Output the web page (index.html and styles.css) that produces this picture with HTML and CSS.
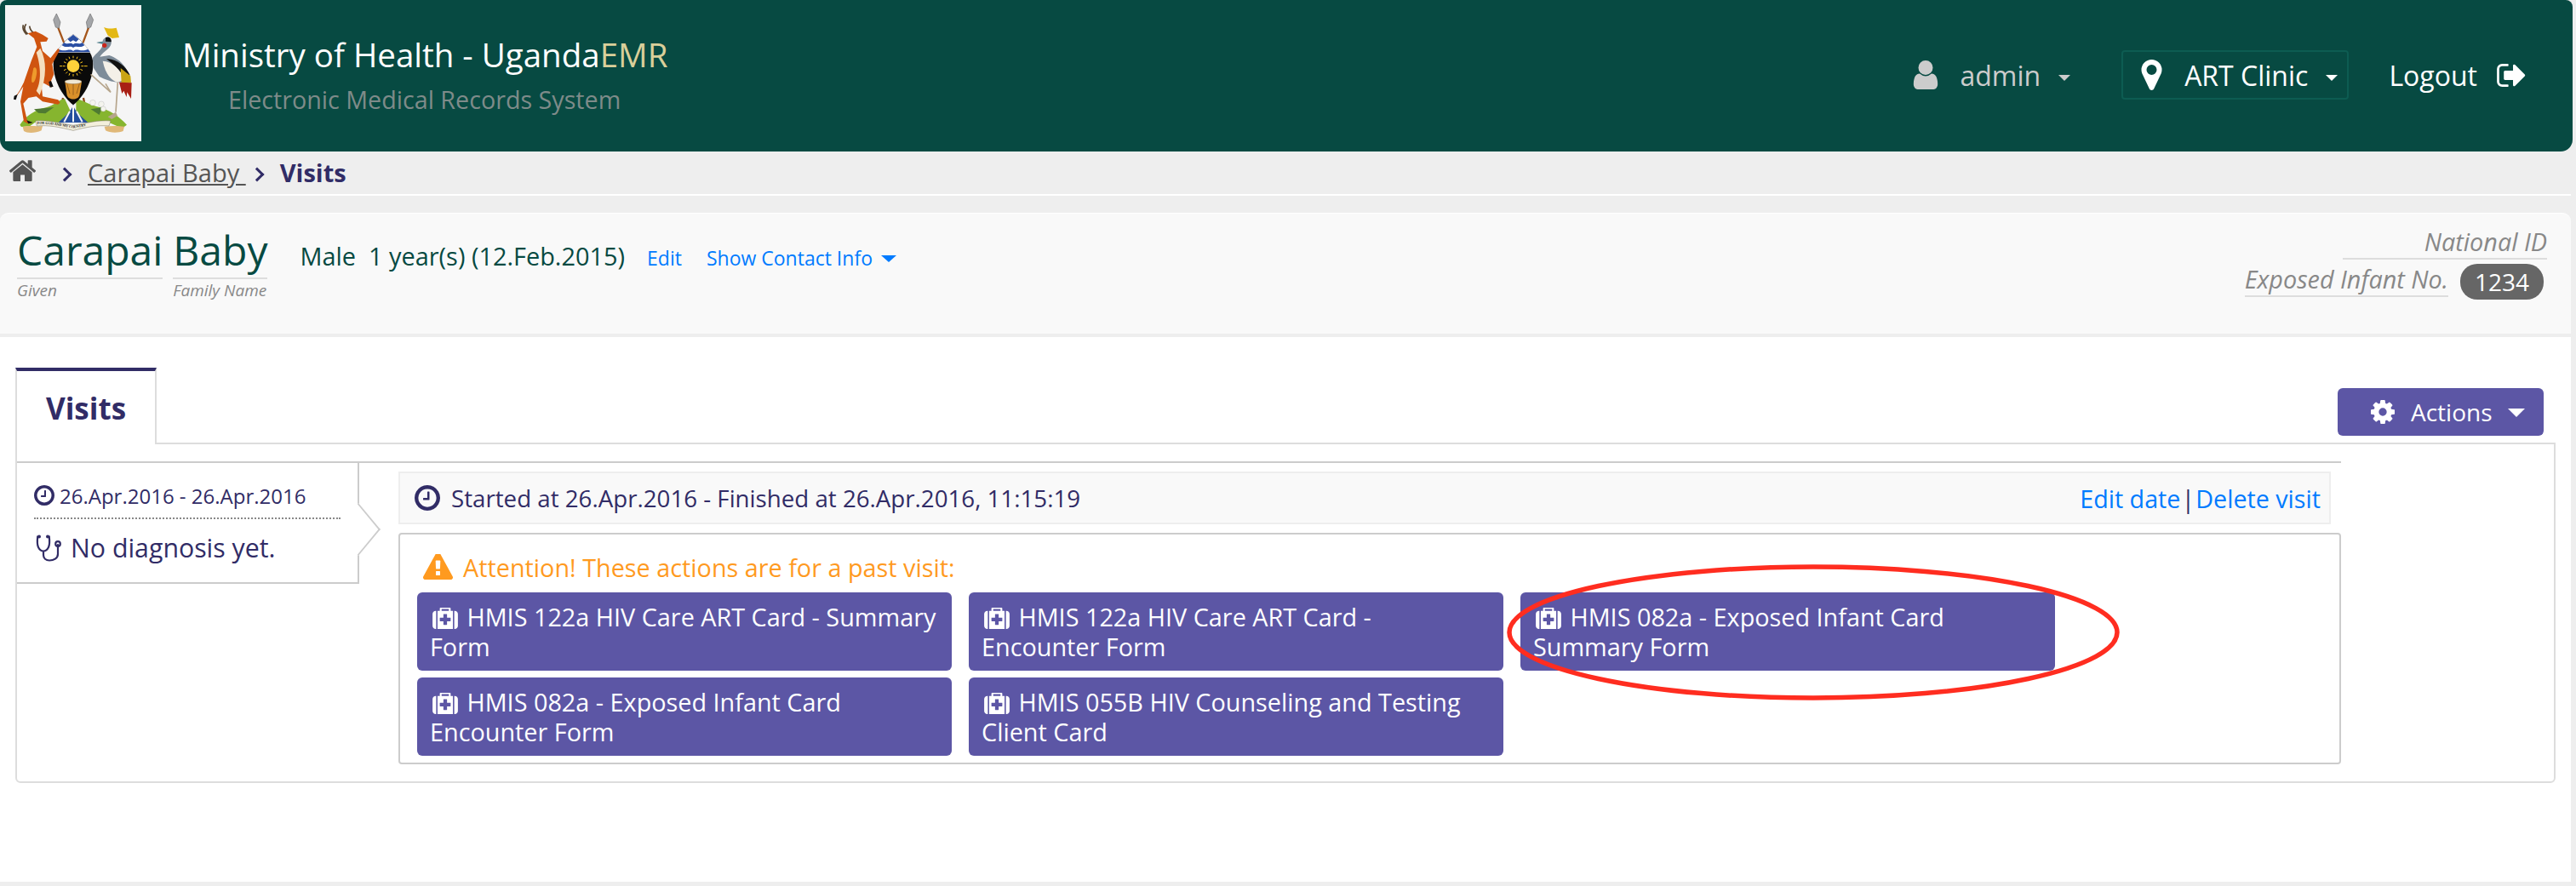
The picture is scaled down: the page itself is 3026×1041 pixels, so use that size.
FILE: index.html
```html
<!DOCTYPE html>
<html lang="en">
<head>
<meta charset="utf-8">
<title>UgandaEMR - Visits</title>
<link rel="stylesheet" href="styles.css">
</head>
<body>
<header class="header">
  <svg class="logo" viewBox="18 18 480 480" role="img" aria-label="Coat of arms of Uganda">
    <rect x="18" y="18" width="480" height="480" fill="#f5f5f5"/>
    <!-- spears -->
    <path d="M205 98L226 152M312 98L292 152" stroke="#a5561c" stroke-width="7" fill="none"/>
    <path d="M199 48L213 78L208 100L196 96L188 70Z M318 48L329 70L320 96L308 100L304 78Z" fill="#a3a5a8" stroke="#555" stroke-width="1.5"/>
    <path d="M222 345L212 398M294 345L304 398" stroke="#8f4a1a" stroke-width="7" fill="none"/>
    <!-- ground -->
    <path d="M70 440C90 410 125 385 165 378C190 372 205 352 228 348L250 395L210 432L128 428L105 445L75 447Z" fill="#86b52f"/>
    <path d="M268 348C290 352 315 370 350 378C385 388 420 410 447 440L430 452L385 432L305 432L268 395Z" fill="#86b52f"/>
    <path d="M120 385L190 378L160 400L135 398Z M320 385L360 378L350 405Z" fill="#4f7a32"/>
    <circle cx="327" cy="362" r="10" fill="#f4f4ee" stroke="#aaa"/>
    <circle cx="357" cy="367" r="10" fill="#f4f4ee" stroke="#aaa"/>
    <circle cx="364" cy="384" r="9" fill="#f4f4ee" stroke="#aaa"/>
    <!-- waterfall -->
    <path d="M258 368C262 395 290 410 310 432H206C226 410 252 395 258 368Z" fill="#244f9e"/>
    <path d="M258 372V430M246 392L226 430M270 392L290 430" stroke="#f5f5f5" stroke-width="6" fill="none"/>
    <!-- plinths and ribbon -->
    <path d="M80 447C100 442 125 446 150 444L146 460C125 470 95 470 84 462Z" fill="#e0b878"/>
    <path d="M368 446C395 442 420 444 438 446L434 462C415 470 385 468 372 460Z" fill="#e0b878"/>
    <path d="M125 426C170 422 210 434 258 442C305 434 345 422 390 426L384 444C345 440 305 448 258 460C210 448 170 440 130 444Z" fill="#f3efdc" stroke="#77705a" stroke-width="1.5"/>
    <path id="motto" d="M131 438C170 434 212 444 258 452C304 444 345 434 386 438" fill="none"/>
    <text class="motto"><textPath href="#motto">FOR GOD AND MY COUNTRY</textPath></text>
    <!-- shield -->
    <path d="M258 120C295 150 328 185 328 225C328 290 290 345 258 370C226 345 188 290 188 225C188 185 221 150 258 120Z" fill="#0a0a0a"/>
    <path d="M258 120C280 138 305 162 318 185H198C211 162 236 138 258 120Z" fill="#fff"/>
    <path d="M258 122L278 138L268 148L258 142L248 148L238 138Z M226 150C240 160 246 146 258 156C270 146 276 160 290 150L298 160C280 172 270 158 258 168C246 158 236 172 218 160Z M206 173C230 186 244 168 258 180C272 168 286 186 310 173L318 184H198Z" fill="#2b4fa3"/>
    <circle cx="258" cy="233" r="22" fill="#ffd23a"/>
    <g stroke="#ffc81e" stroke-width="3">
      <path d="M258 197V205M258 261V269M222 233H230M286 233H294M232 207L238 213M278 253L284 259M232 259L238 253M278 213L284 207M243 200L246 208M270 258L273 266M243 266L246 258M270 208L273 200M225 218L233 222M283 244L291 248M225 248L233 244M283 222L291 218M210 233H220M296 233H308"/>
    </g>
    <path d="M229 288C232 280 284 280 288 288L280 335C276 354 240 354 236 335Z" fill="#d8902a"/>
    <ellipse cx="258" cy="288" rx="30" ry="8" fill="#efe8d4" stroke="#5b3a16"/>
    <path d="M236 295L246 330M280 295L270 330M258 296V335" stroke="#7a4a16" stroke-width="2"/>
    <!-- kob -->
    <path d="M92 85C84 95 84 108 98 120M82 88C78 100 84 112 94 122M104 92C106 105 112 112 120 116" stroke="#5a4630" stroke-width="5" fill="none"/>
    <path d="M98 118L125 110L150 122L170 135L164 146L142 148L150 180L178 205L205 170L210 178L184 226L190 262L180 285L182 308L145 288L150 340L205 352L212 362L204 368L150 358L128 340L100 345L82 365L96 425L112 432L98 436L84 428L72 358L82 305L58 340L50 348L70 318L84 290L110 215L130 165L120 135Z" fill="#cf5410"/>
    <path d="M142 170C165 215 165 270 140 335L128 320C150 280 140 220 128 185Z" fill="#f4dfc0"/>
    <path d="M118 240C128 232 134 250 126 275C120 295 108 300 112 270Z" fill="#ee9a2c"/>
    <path d="M180 285L188 305L176 308L172 288Z M50 338L62 332L56 352L48 350Z M94 424L116 432L100 436Z" fill="#111"/>
    <!-- crane -->
    <path d="M366 96C385 104 400 100 410 98L420 132L395 135L380 125Z" fill="#e3b814"/>
    <path d="M340 150L362 146C362 132 388 122 392 145C396 170 365 180 352 200L385 195C430 210 458 250 458 290L418 290C395 290 370 280 350 270L330 240L326 205C340 185 360 175 362 156Z" fill="#7e8c99"/>
    <path d="M362 215C395 215 432 250 440 280L415 290C395 285 372 265 362 215Z" fill="#f4f0e8"/>
    <path d="M375 208C410 205 445 235 458 265L440 275C420 245 400 225 375 208Z" fill="#111"/>
    <path d="M425 240L460 268L462 292L428 292Z" fill="#c9a415"/>
    <path d="M420 290L464 292L462 348L448 325L446 342L436 320L430 330Z" fill="#a81f14"/>
    <circle cx="368" cy="160" r="8" fill="#c9261c"/>
    <path d="M372 132C385 126 394 136 392 148L372 146Z" fill="#111"/>
    <path d="M340 150L362 146V154Z" fill="#4c8a94"/>
    <path d="M415 290L408 395M320 262L390 325L372 295" stroke="#b6a58c" stroke-width="5" fill="none"/>
    <path d="M380 412L408 395L414 408L394 420Z" fill="#b6a58c"/>
  </svg>
  <div class="brand">
    <h1 class="brand-title">Ministry of Health - Uganda<span class="brand-accent">EMR</span></h1>
    <p class="brand-sub">Electronic Medical Records System</p>
  </div>
  <nav class="top-nav">
    <a class="nav-user">
      <svg class="ic ic-user" viewBox="256 128 1280 1536"><path d="M1536 1399q0 109-62.500 187t-150.500 78h-854q-88 0-150.500-78t-62.500-187q0-85 8.500-160.500t31.500-152 58.500-131 94-89 134.500-34.500q131 128 313 128t313-128q76 0 134.500 34.500t94 89 58.500 131 31.500 152 8.500 160.500zm-256-887q0 159-112.500 271.500t-271.500 112.500-271.500-112.500-112.500-271.500 112.500-271.500 271.500-112.500 271.500 112.500 112.500 271.500z"/></svg>
      <span class="nav-label">admin</span><i class="caret"></i>
    </a>
    <a class="nav-location">
      <svg class="ic ic-pin" viewBox="384 128 1024 1536"><path d="M1152 640q0-106-75-181t-181-75-181 75-75 181 75 181 181 75 181-75 75-181zm256 0q0 109-33 179l-364 774q-16 33-47.500 52t-67.500 19-67.500-19-46.500-52l-365-774q-33-70-33-179 0-212 150-362t362-150 362 150 150 362z"/></svg>
      <span class="nav-label">ART Clinic</span><i class="caret"></i>
    </a>
    <a class="nav-logout">
      <span class="nav-label">Logout</span>
      <svg class="ic ic-logout" viewBox="64 256 1600 1280"><path d="M704 1440q0 4 1 20t.5 26.500-3 23.500-10 19.500-20.500 6.500h-320q-119 0-203.500-84.500t-84.500-203.500v-704q0-119 84.500-203.500t203.500-84.500h320q13 0 22.500 9.500t9.500 22.500q0 4 1 20t.5 26.500-3 23.500-10 19.500-20.500 6.500h-320q-66 0-113 47t-47 113v704q0 66 47 113t113 47h312l11.500 1 11.500 3 8 5.500 7 9 2 13.500zm928-544q0 26-19 45l-544 544q-19 19-45 19t-45-19-19-45v-288h-448q-26 0-45-19t-19-45v-384q0-26 19-45t45-19h448v-288q0-26 19-45t45-19 45 19l544 544q19 19 19 45z"/></svg>
    </a>
  </nav>
</header>

<div class="crumbs">
  <svg class="ic ic-home" viewBox="96 192 1600 1344"><path d="M1472 992v480q0 26-19 45t-45 19h-384v-384h-256v384h-384q-26 0-45-19t-19-45v-480q0-1 .5-3t.5-3l575-474 575 474q1 2 1 6zm223-69l-62 74q-8 9-21 11h-3q-13 0-21-7l-692-577-692 577q-12 8-24 7-13-2-21-11l-62-74q-8-10-7-23.500t11-21.500l719-599q32-26 76-26t76 26l244 204v-195q0-14 9-23t23-9h192q14 0 23 9t9 23v408l219 182q10 8 11 21.500t-7 23.500z"/></svg>
  <i class="chev chev-first"></i>
  <a class="crumb-link">Carapai Baby&nbsp;</a>
  <i class="chev chev-second"></i>
  <strong class="crumb-current">Visits</strong>
</div>

<section class="patient">
  <div class="names">
    <div class="name-part name-given"><span class="name-value">Carapai</span><small class="name-label">Given</small></div>
    <div class="name-part name-family"><span class="name-value">Baby</span><small class="name-label">Family Name</small></div>
  </div>
  <div class="demog">Male&nbsp; 1 year(s) (12.Feb.2015)</div>
  <a class="plink plink-edit">Edit</a>
  <a class="plink plink-contact">Show Contact Info<i class="caret caret-blue"></i></a>
  <div class="ids">
    <div class="id-row"><em class="id-label id-national">National ID</em></div>
    <div class="id-row"><em class="id-label id-exposed">Exposed Infant No.</em><span class="badge">1234</span></div>
  </div>
</section>

<main class="content">
  <div class="tab-row">
    <div class="tab">Visits</div>
    <button class="actions-btn">
      <svg class="ic ic-gear" viewBox="128 128 1536 1536"><path d="M1152 896q0-106-75-181t-181-75-181 75-75 181 75 181 181 75 181-75 75-181zm512-109v222q0 12-8 23t-20 13l-185 28q-19 54-39 91 35 50 107 138 10 12 10 25t-9 23q-27 37-99 108t-94 71q-12 0-26-9l-138-108q-44 23-91 38-16 136-29 186-7 28-36 28h-222q-14 0-24.500-8.500t-11.500-21.500l-28-184q-49-16-90-37l-141 107q-10 9-25 9-14 0-25-11-126-114-165-168-7-10-7-23 0-12 8-23 15-21 51-66.500t54-70.500q-27-50-41-99l-183-27q-13-2-21-12.500t-8-23.500v-222q0-12 8-23t19-13l186-28q14-46 39-92-40-57-107-138-10-12-10-24 0-10 9-23 26-36 98.500-107.500t94.500-71.500q13 0 26 10l138 107q44-23 91-38 16-136 29-186 7-28 36-28h222q14 0 24.500 8.500t11.500 21.500l28 184q49 16 90 37l142-107q9-9 24-9 13 0 25 10 129 119 165 170 7 8 7 22 0 12-8 23-15 21-51 66.500t-54 70.500q26 50 41 98l183 28q13 2 21 12.500t8 23.500z"/></svg>
      <span>Actions</span><i class="caret caret-large"></i>
    </button>
  </div>
  <div class="tab-panel">
    <div class="visits">
      <aside class="visit-card">
        <div class="visit-dates">
          <svg class="ic ic-clock-sm" viewBox="128 128 1536 1536"><path d="M1024 544v448q0 14-9 23t-23 9h-320q-14 0-23-9t-9-23v-64q0-14 9-23t23-9h224v-352q0-14 9-23t23-9h64q14 0 23 9t9 23zm416 352q0-148-73-273t-198-198-273-73-273 73-198 198-73 273 73 273 198 198 273 73 273-73 198-198 73-273zm224 0q0 209-103 385.500t-279.500 279.500-385.500 103-385.500-103-279.500-279.500-103-385.500 103-385.500 279.500-279.500 385.500-103 385.500 103 279.500 279.500 103 385.500z"/></svg>
          <span>26.Apr.2016 - 26.Apr.2016</span>
        </div>
        <div class="visit-diag">
          <svg class="ic-steth" viewBox="0 0 30 32"><path d="M3.5 2.500H2.200C1.500 9 1.500 12 3 15C4.500 18 7 19.500 9 19.500C11 19.500 13.500 18 15 15C16.500 12 16.500 9 15.800 2.500H14.500M9 19.500V24C9 28 12 30.500 16 30.500C21 30.500 26 28 26 23V12" fill="none" stroke="currentColor" stroke-width="2.200" stroke-linecap="round"/><circle cx="4" cy="2.500" r="2" fill="currentColor"/><circle cx="14" cy="2.500" r="2" fill="currentColor"/><circle cx="26" cy="11" r="2.800" fill="none" stroke="currentColor" stroke-width="2.200"/></svg>
          <span>No diagnosis yet.</span>
        </div>
      </aside>
      <div class="visit-main">
        <div class="visit-head">
          <svg class="ic ic-clock" viewBox="128 128 1536 1536"><path d="M1024 544v448q0 14-9 23t-23 9h-320q-14 0-23-9t-9-23v-64q0-14 9-23t23-9h224v-352q0-14 9-23t23-9h64q14 0 23 9t9 23zm416 352q0-148-73-273t-198-198-273-73-273 73-198 198-73 273 73 273 198 198 273 73 273-73 198-198 73-273zm224 0q0 209-103 385.500t-279.500 279.500-385.500 103-385.500-103-279.500-279.500-103-385.500 103-385.500 279.500-279.500 385.500-103 385.500 103 279.500 279.500 103 385.500z"/></svg>
          <span class="visit-range">Started at 26.Apr.2016 - Finished at 26.Apr.2016, 11:15:19</span>
          <span class="visit-links"><a>Edit date</a><span class="sep">|</span><a>Delete visit</a></span>
        </div>
        <div class="forms-box">
          <div class="attention">
            <svg class="ic ic-warn" viewBox="0 128 1792 1536"><path d="M1024 1375v-190q0-14-9.500-23.500t-22.500-9.500h-192q-13 0-22.500 9.500t-9.500 23.500v190q0 14 9.500 23.500t22.500 9.500h192q13 0 22.500-9.500t9.500-23.500zm-2-374l18-459q0-12-10-19-13-11-24-11h-220q-11 0-24 11-10 7-10 21l17 457q0 10 10 16.500t24 6.500h185q14 0 23.500-6.500t10.500-16.500zm-14-934l768 1408q35 63-2 126-17 29-46.500 46t-63.500 17h-1536q-34 0-63.500-17t-46.500-46q-37-63-2-126l768-1408q17-31 47-49t65-18 65 18 47 49z"/></svg>
            <span>Attention! These actions are for a past visit:</span>
          </div>
          <div class="forms-grid">
            <a class="form-btn"><svg class="ic ic-med" viewBox="0 192 1792 1504"><use href="#medkit"/></svg> HMIS 122a HIV Care ART Card - Summary Form</a>
            <a class="form-btn"><svg class="ic ic-med" viewBox="0 192 1792 1504"><use href="#medkit"/></svg> HMIS 122a HIV Care ART Card - Encounter Form</a>
            <a class="form-btn"><svg class="ic ic-med" viewBox="0 192 1792 1504"><use href="#medkit"/></svg> HMIS 082a - Exposed Infant Card Summary Form</a>
            <a class="form-btn"><svg class="ic ic-med" viewBox="0 192 1792 1504"><use href="#medkit"/></svg> HMIS 082a - Exposed Infant Card Encounter Form</a>
            <a class="form-btn"><svg class="ic ic-med" viewBox="0 192 1792 1504"><use href="#medkit"/></svg> HMIS 055B HIV Counseling and Testing Client Card</a>
          </div>
        </div>
      </div>
    </div>
  </div>
</main>

<svg class="markup" viewBox="0 0 720 160" aria-hidden="true"><ellipse cx="360" cy="80" rx="357" ry="77"/></svg>
<svg class="defs" aria-hidden="true"><defs><path id="medkit" d="M1280 1120v-192q0-14-9-23t-23-9h-224v-224q0-14-9-23t-23-9h-192q-14 0-23 9t-9 23v224h-224q-14 0-23 9t-9 23v192q0 14 9 23t23 9h224v224q0 14 9 23t23 9h192q14 0 23-9t9-23v-224h224q14 0 23-9t9-23zm-640-704h512v-128h-512v128zm-384 0v1280h-32q-92 0-158-66t-66-158v-832q0-92 66-158t158-66h32zm1184 0v1280h-1088v-1280h160v-160q0-40 28-68t68-28h576q40 0 68 28t28 68v160h160zm352 224v832q0 92-66 158t-158 66h-32v-1280h32q92 0 158 66t66 158z"/></defs></svg>
</body>
</html>
```
FILE: styles.css
```css
* { box-sizing: border-box; }
html, body { margin: 0; height: 1041px; overflow: hidden; }
body {
  position: relative;
  background: #eee;
  font-family: "Open Sans", "Noto Sans", sans-serif;
  color: #312c66;
}
a { text-decoration: none; }
h1, p { margin: 0; font-weight: 400; }
.ic { display: block; fill: currentColor; flex: none; }
.defs { display: none; }

/* header */
.header {
  display: flex;
  align-items: flex-start;
  width: 3022px;
  height: 178px;
  padding: 6px 0 0 6px;
  background: #074a42;
  border-radius: 8px 8px 14px 14px;
}
.logo { width: 160px; height: 160px; flex: none; display: block; }
.motto { font: 700 12.5px "Liberation Serif", serif; fill: #222; letter-spacing: -.1px; }
.brand { margin-left: 48px; padding-top: 32px; }
.brand-title { font-size: 38.5px; line-height: 52px; color: #fff; }
.brand-accent { color: #d9cf9a; }
.brand-sub { margin: 8px 0 0 54px; font-size: 28.7px; line-height: 38px; color: #7e8b89; }
.top-nav { display: flex; align-items: center; margin-left: auto; height: 60px; margin-top: 52px; font-size: 32px; }
.nav-user { display: flex; align-items: center; color: #ccc; }
.ic-user { width: 30px; height: 34px; margin-right: 25px; }
.caret {
  display: block;
  width: 0; height: 0;
  margin-left: 21px;
  margin-top: 6px;
  border-style: solid;
  border-width: 7px 7px 0;
  border-color: currentColor transparent transparent;
}
.nav-location {
  display: flex;
  align-items: center;
  height: 58px;
  margin-left: 60px;
  padding: 0 11px 0 21px;
  color: #fff;
  border: 2px solid #0d5c52;
  border-radius: 4px;
}
.ic-pin { width: 25px; height: 36px; margin-right: 26px; }
.nav-logout { display: flex; align-items: center; margin-left: 47px; margin-right: 55px; color: #fff; }
.ic-logout { width: 34px; height: 27px; margin-left: 23px; }

/* breadcrumb */
.crumbs {
  display: flex;
  align-items: center;
  width: 3020px;
  height: 52px;
  padding: 0 0 1px 11px;
  font-size: 29px;
  color: #555;
  border-bottom: 2px solid #fff;
}
.ic-home { width: 31px; height: 26px; margin-top: -5px; }
.chev {
  display: block;
  width: 12px; height: 12px;
  border-top: 3px solid #312c66;
  border-right: 3px solid #312c66;
  transform: rotate(45deg);
}
.chev-first { margin: 4px 21px 0 28px; }
.chev-second { margin: 4px 21px 0 7px; }
.crumb-link { color: #555; text-decoration: underline; }
.crumb-current { font-weight: 700; color: #312c66; }

/* patient */
.patient {
  position: relative;
  display: flex;
  align-items: flex-start;
  width: 3020px;
  height: 146px;
  margin-top: 20px;
  padding: 0 28px 0 20px;
  background: #f9f9f9;
  border-top: 1px solid #fff;
  border-bottom: 4px solid #eee;
  border-radius: 10px 10px 0 0;
  color: #074a42;
}
.names { display: flex; gap: 12px; padding-top: 10px; }
.name-part { display: flex; flex-direction: column; }
.name-value { font-size: 48px; line-height: 65px; border-bottom: 2px solid #ddd; }
.name-label { font-size: 19px; line-height: 26px; font-style: italic; color: #888; }
.demog { margin: 31px 0 0 38px; font-size: 28.9px; line-height: 38px; }
.plink { display: flex; align-items: center; margin-top: 36px; font-size: 23px; line-height: 33px; color: #007bff; }
.plink-edit { margin-left: 26px; }
.plink-contact { margin-left: 29px; }
.caret-blue { margin-left: 10px; margin-top: 0; border-width: 8px 9px 0; }
.ids { margin-left: auto; display: flex; flex-direction: column; align-items: flex-end; padding-top: 14px; }
.id-row { display: flex; align-items: flex-end; }
.id-label { font-size: 28.8px; line-height: 38px; color: #888; border-bottom: 2px solid #ddd; }
.id-national { width: 240px; text-align: right; }
.id-exposed { margin-bottom: 3px; }
.badge {
  width: 98px;
  margin: 5px 4px 0 14px;
  height: 42px;
  line-height: 42px;
  text-align: center;
  font-size: 28px;
  color: #fff;
  background: #666;
  border-radius: 20px;
}

/* content */
.content { width: 3020px; height: 640px; padding: 36px 0 0 18px; background: #fff; }
.tab-row { display: flex; justify-content: space-between; align-items: flex-end; width: 2970px; height: 88px; }
.tab {
  width: 166px;
  height: 90px;
  margin-bottom: -2px;
  padding-top: 21px;
  text-align: center;
  font-size: 35px;
  line-height: 46px;
  font-weight: 700;
  background: #fff;
  border: 2px solid #ddd;
  border-top: 4px solid #312c66;
  border-bottom: 0;
  position: relative;
  z-index: 1;
}
.actions-btn {
  display: flex;
  align-items: center;
  width: 242px;
  height: 56px;
  margin-bottom: 8px;
  padding: 0 0 0 39px;
  font: 400 28px "Open Sans", sans-serif;
  color: #fff;
  background: #5c56a5;
  border: 0;
  border-radius: 6px;
}
.ic-gear { width: 28px; height: 28px; margin-right: 19px; }
.caret-large { margin-left: 18px; margin-top: 2px; border-width: 10px 10px 0; }
.tab-panel { width: 2984px; height: 400px; padding-top: 20px; border: 2px solid #ddd; border-radius: 0 0 6px 6px; }
.visits { display: flex; align-items: flex-start; width: 2730px; border-top: 2px solid #ccc; }
.visit-card {
  position: relative;
  flex: none;
  width: 402px;
  height: 142px;
  padding: 21px 20px 0 20px;
  border-right: 2px solid #ccc;
  border-bottom: 2px solid #ccc;
}
.visit-card::after {
  content: "";
  position: absolute;
  top: 56px;
  right: -23px;
  width: 42px;
  height: 42px;
  background: #fff;
  border-top: 2px solid #ccc;
  border-right: 2px solid #ccc;
  transform: scaleX(.83) rotate(45deg);
}
.visit-dates {
  display: flex;
  align-items: center;
  gap: 6px;
  height: 45px;
  padding-bottom: 9px;
  font-size: 24px;
  border-bottom: 2px dotted #888;
}
.ic-clock-sm { width: 24px; height: 24px; }
.visit-diag { display: flex; align-items: center; gap: 11px; margin-top: 13px; padding-left: 2px; font-size: 30.3px; line-height: 42px; }
.ic-steth { display: block; width: 30px; height: 32px; flex: none; }
.visit-main { flex: none; width: 2282px; margin-left: 46px; padding-top: 10px; }
.visit-head {
  display: flex;
  align-items: center;
  width: 2270px;
  height: 62px;
  padding: 0 10px 0 17px;
  font-size: 27.7px;
  background: #f9f9f9;
  border: 2px solid #eee;
}
.ic-clock { width: 30px; height: 30px; margin-right: 13px; }
.visit-links { display: flex; align-items: center; margin-left: auto; font-size: 28.7px; }
.visit-links a { color: #007bff; }
.sep { margin: 0 1px; }
.forms-box { margin-top: 10px; height: 272px; padding: 20px 0 0 20px; border: 2px solid #ccc; border-radius: 4px; }
.attention { display: flex; align-items: center; gap: 12px; height: 36px; padding-left: 7px; font-size: 28.8px; color: #ff9a1f; }
.ic-warn { width: 35px; height: 30px; }
.forms-grid { display: grid; grid-template-columns: repeat(3, 628px); gap: 8px 20px; margin-top: 12px; }
.form-btn {
  display: block;
  height: 92px;
  padding: 11px 15px 0;
  font-size: 28.8px;
  line-height: 35px;
  color: #fff;
  background: #5c56a5;
  border-radius: 6px;
}
.ic-med { display: inline-block; width: 30px; height: 25px; margin: 0 3px 0 3px; vertical-align: -3px; }

/* hand-drawn annotation lying over the page */
.markup { position: absolute; left: 1770px; top: 663px; width: 720px; height: 160px; }
.markup ellipse { fill: none; stroke: #ff2d20; stroke-width: 5.5px; }
```
